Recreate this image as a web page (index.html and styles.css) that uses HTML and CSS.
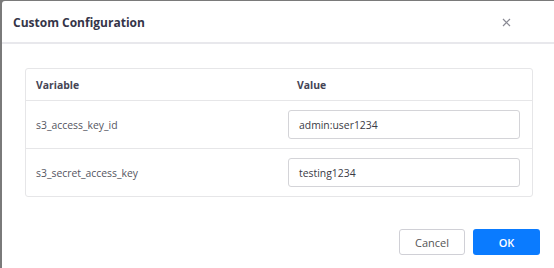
FILE: index.html
```html
<!DOCTYPE html>
<html>
<head>
<meta charset="utf-8">
<link rel="stylesheet" href="styles.css">
</head>
<body>
<div class="modal">
  <div class="modal-header">
    <div class="title">Custom Configuration</div>
    <div class="close">
      <svg width="9" height="9" viewBox="0 0 9 9"><path d="M1 1L8 8M8 1L1 8" stroke="#8a8a94" stroke-width="1.2" fill="none"/></svg>
    </div>
  </div>
  <div class="modal-body">
    <div class="table">
      <div class="row head">
        <div class="c1">Variable</div>
        <div class="c2">Value</div>
      </div>
      <div class="row">
        <div class="c1">s3_access_key_id</div>
        <div class="c2"><div class="input">admin:user1234</div></div>
      </div>
      <div class="row last">
        <div class="c1">s3_secret_access_key</div>
        <div class="c2"><div class="input">testing1234</div></div>
      </div>
    </div>
  </div>
  <div class="modal-footer">
    <div class="btn cancel">Cancel</div>
    <div class="btn ok">OK</div>
  </div>
</div>
</body>
</html>
```
FILE: styles.css
```css
html, body { margin: 0; padding: 0; }
body {
  background: #7a7a7a;
  width: 554px;
  height: 268px;
  overflow: hidden;
  font-family: "Open Sans", sans-serif;
  padding: 1px 0 0 2px;
  box-sizing: border-box;
}
.modal {
  background: #fff;
  height: 267px;
  border-top-left-radius: 3px;
  display: flex;
  flex-direction: column;
}
.modal-header {
  height: 41px;
  border-bottom: 2px solid #e8e8ec;
  display: flex;
  align-items: center;
  justify-content: space-between;
  padding: 0 43px 0 11px;
}
.title {
  font-size: 12px;
  font-weight: 700;
  color: #353548;
  padding-top: 1px;
}
.close { display: flex; padding-top: 2px; }
.modal-body {
  padding: 24px 21px 0 23px;
}
.table {
  border: 1px solid #e6e6e8;
  border-radius: 3px;
}
.row {
  display: flex;
  align-items: center;
  height: 47px;
  border-bottom: 1px solid #e6e6e8;
  font-size: 10.4px;
  color: #55555f;
}
.row.head {
  height: 31px;
  font-weight: 700;
  color: #454555;
}
.row.last { border-bottom: none; }
.c1 { width: 262px; padding-left: 10px; box-sizing: border-box; }
.c2 { flex: 1; padding-right: 12px; }
.head .c2 { padding-left: 9px; }
.input {
  height: 27px;
  border: 1px solid #d4d4d8;
  border-radius: 3px;
  display: flex;
  align-items: center;
  padding-left: 10px;
  color: #3a3a45;
}
.modal-footer {
  display: flex;
  justify-content: flex-end;
  gap: 8px;
  padding: 32px 14px 0 0;
}
.btn {
  height: 26px;
  width: 66px;
  border-radius: 3px;
  display: flex;
  align-items: center;
  justify-content: center;
  font-size: 11px;
  box-sizing: border-box;
}
.cancel { border: 1px solid #d0d0d6; color: #555; background: #fff; }
.ok { background: #0a7bff; color: #fff; font-weight: 600; width: 67px; }
```
